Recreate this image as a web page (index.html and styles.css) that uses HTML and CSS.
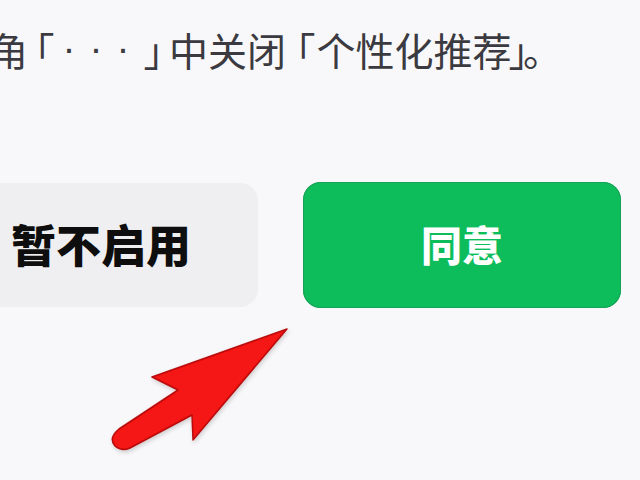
FILE: index.html
```html
<!DOCTYPE html>
<html lang="zh-CN">
<head>
<meta charset="utf-8">
<link rel="stylesheet" href="styles.css">
</head>
<body>
<div class="page">
  <p class="hint">角<span class="bl bl-1">「</span><span class="dots">···</span><span class="br br-1">」</span>中关闭<span class="bl bl-2">「</span>个性化推荐<span class="br br-2">」</span><span class="stop">。</span></p>
  <div class="actions">
    <button class="btn btn-cancel">暂不启用</button>
    <button class="btn btn-ok">同意</button>
  </div>
  <svg class="arrow" width="200" height="150" viewBox="0 0 200 150">
    <defs>
      <filter id="sh" x="-20%" y="-20%" width="140%" height="140%">
        <feDropShadow dx="1" dy="2" stdDeviation="2" flood-color="#000" flood-opacity="0.18"/>
      </filter>
    </defs>
    <path filter="url(#sh)" d="M187 9 L52 57 L78 70 L19 109 Q8 118 15 126 Q22 132 30 128 L92 95 L93 120 Z" fill="#f51212" stroke="#b80e0e" stroke-width="1.5" stroke-linejoin="round"/>
  </svg>
</div>
</body>
</html>
```
FILE: styles.css
```css
html, body {
  margin: 0;
  padding: 0;
  background: #f8f8fa;
}
body {
  width: 640px;
  height: 480px;
  overflow: hidden;
  font-family: "Noto Sans CJK SC", "Noto Sans", sans-serif;
}
.page {
  position: relative;
  width: 640px;
  height: 480px;
  overflow: hidden;
}
.hint {
  margin: 0;
  padding-top: 23px;
  height: 51px;
  margin-left: -11px;
  font-size: 39px;
  line-height: 52px;
  color: #3b3a40;
  white-space: nowrap;
  font-weight: 400;
}
.bl, .br, .stop {
  font-feature-settings: "halt" 1;
}
.bl, .br, .dots, .stop {
  display: inline-block;
  vertical-align: top;
}
.bl-1 { margin-left: 7px; }
.dots {
  font-family: "Liberation Sans", sans-serif;
  letter-spacing: 14px;
  margin-left: 8px;
}
.br-1 { margin-right: 6px; }
.bl-2 { margin-left: 10px; margin-right: 1px; }
.br-2 { margin-left: -3px; }
.stop { margin-left: -5px; }
.actions {
  display: flex;
  gap: 45px;
  margin-top: 109px;
  margin-left: -56px;
}
.btn {
  border: none;
  width: 314px;
  height: 124px;
  border-radius: 18px;
  font-family: "Noto Sans CJK SC", sans-serif;
  display: flex;
  align-items: center;
  justify-content: center;
  padding: 0;
}
.btn-cancel {
  background: #efeff1;
  color: #0e0e0e;
  font-size: 45px;
  font-weight: 900;
  padding-bottom: 4px;
}
.btn-ok {
  width: 318px;
  height: 126px;
  margin-top: -1px;
  background: #0dbd5c;
  box-shadow: inset 0 0 0 1px #17a157;
  color: #fff;
  font-size: 41px;
  font-weight: 900;
  padding-bottom: 4px;
}
.arrow {
  position: absolute;
  left: 100px;
  top: 320px;
}
```
